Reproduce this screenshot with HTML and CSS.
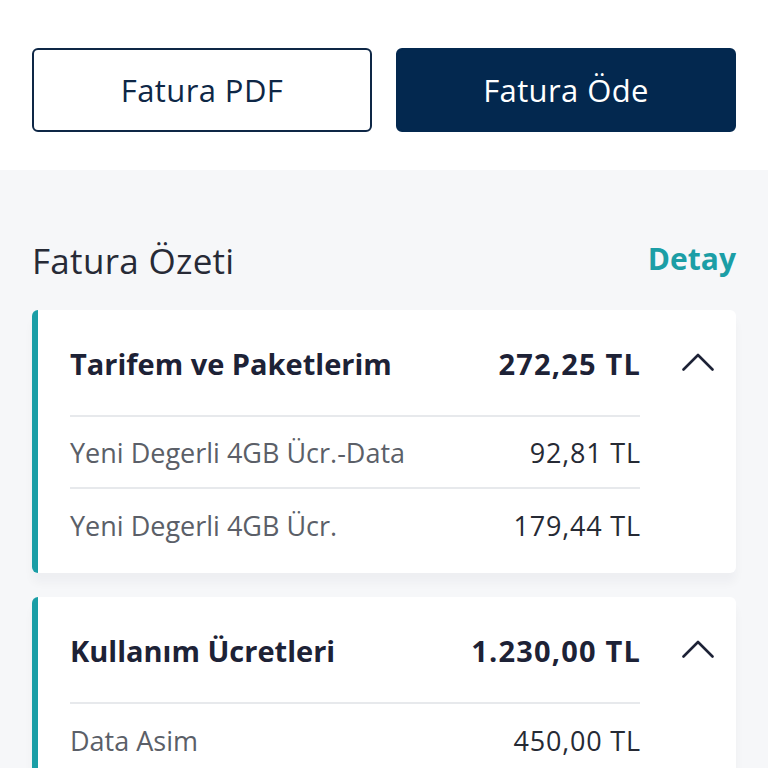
FILE: index.html
```html
<!DOCTYPE html>
<html lang="tr">
<head>
<meta charset="utf-8">
<title>Fatura Özeti</title>
<link rel="stylesheet" href="styles.css">
</head>
<body>
<div class="top">
  <div class="actions">
    <button class="btn btn-outline">Fatura PDF</button>
    <button class="btn btn-solid">Fatura Öde</button>
  </div>
</div>
<div class="summary">
  <div class="summary-head">
    <h2 class="summary-title">Fatura Özeti</h2>
    <a class="detail-link">Detay</a>
  </div>

  <div class="card">
    <div class="card-body">
      <div class="card-head">
        <span class="card-title">Tarifem ve Paketlerim</span>
        <span class="card-total">272,25 TL</span>
      </div>
      <div class="line">
        <span class="line-label">Yeni Degerli 4GB Ücr.-Data</span>
        <span class="line-value">92,81 TL</span>
      </div>
      <div class="line line-last">
        <span class="line-label">Yeni Degerli 4GB Ücr.</span>
        <span class="line-value">179,44 TL</span>
      </div>
    </div>
    <div class="chev">
      <svg width="32" height="20" viewBox="0 0 32 20"><polyline points="1.5,17.5 16,3 30.5,17.5" fill="none" stroke="#1d2236" stroke-width="2.6" stroke-linecap="round" stroke-linejoin="round"/></svg>
    </div>
  </div>

  <div class="card">
    <div class="card-body">
      <div class="card-head">
        <span class="card-title">Kullanım Ücretleri</span>
        <span class="card-total">1.230,00 TL</span>
      </div>
      <div class="line line-last">
        <span class="line-label">Data Asim</span>
        <span class="line-value">450,00 TL</span>
      </div>
    </div>
    <div class="chev">
      <svg width="32" height="20" viewBox="0 0 32 20"><polyline points="1.5,17.5 16,3 30.5,17.5" fill="none" stroke="#1d2236" stroke-width="2.6" stroke-linecap="round" stroke-linejoin="round"/></svg>
    </div>
  </div>
</div>
</body>
</html>
```

FILE: styles.css
```css
* { box-sizing: border-box; }
html, body {
  margin: 0;
  padding: 0;
  height: 768px;
  overflow: hidden;
}
body {
  font-family: "Open Sans", Lato, "Noto Sans", "DejaVu Sans", sans-serif;
  color: #1d2236;
  background: #f6f7f9;
}
.top {
  background: #ffffff;
  padding: 48px 32px 38px;
}
.actions {
  display: grid;
  grid-template-columns: 1fr 1fr;
  gap: 24px;
}
.btn {
  height: 84px;
  border-radius: 6px;
  font-family: inherit;
  font-size: 31px;
  font-weight: 400;
  letter-spacing: 0.4px;
  display: flex;
  align-items: center;
  justify-content: center;
  padding: 0;
}
.btn-outline {
  background: #ffffff;
  border: 2px solid #0e2746;
  color: #0e2746;
}
.btn-solid {
  background: #03284f;
  border: 2px solid #03284f;
  color: #ffffff;
}
.summary {
  padding: 70px 32px 0;
}
.summary-head {
  display: flex;
  justify-content: space-between;
  align-items: center;
  height: 40px;
  margin-bottom: 30px;
}
.summary-title {
  margin: 0;
  font-size: 35px;
  font-weight: 400;
  color: #272a36;
  letter-spacing: 0.3px;
}
.detail-link {
  font-size: 30px;
  font-weight: 700;
  color: #1b9ea6;
  margin-top: -4px;
}
.card {
  display: flex;
  background: #ffffff;
  border-left: 6px solid #1a9ea6;
  border-radius: 6px;
  padding-left: 32px;
  margin-bottom: 24px;
  box-shadow: 0 10px 10px rgba(30, 40, 60, 0.035);
}
.card-body {
  flex: 1;
}
.card-head {
  display: flex;
  justify-content: space-between;
  align-items: center;
  height: 107px;
  padding-top: 2px;
  border-bottom: 2px solid #e7e9ec;
}
.card-title {
  font-size: 29px;
  font-weight: 700;
  color: #1d2236;
}
.card-total {
  font-size: 29px;
  font-weight: 700;
  color: #1d2236;
  letter-spacing: 1.2px;
  margin-right: -1.2px;
}
.line {
  display: flex;
  justify-content: space-between;
  align-items: center;
  height: 72px;
  border-bottom: 2px solid #e7e9ec;
}
.line-last {
  border-bottom: none;
  height: 84px;
  padding-bottom: 12px;
}
.line-label {
  font-size: 27px;
  color: #5b5f68;
}
.line-value {
  font-size: 27px;
  color: #262a34;
  letter-spacing: 0.8px;
  margin-right: -0.8px;
}
.chev {
  width: 96px;
  display: flex;
  justify-content: flex-end;
  padding: 42px 22px 0 0;
  align-items: flex-start;
}
```
